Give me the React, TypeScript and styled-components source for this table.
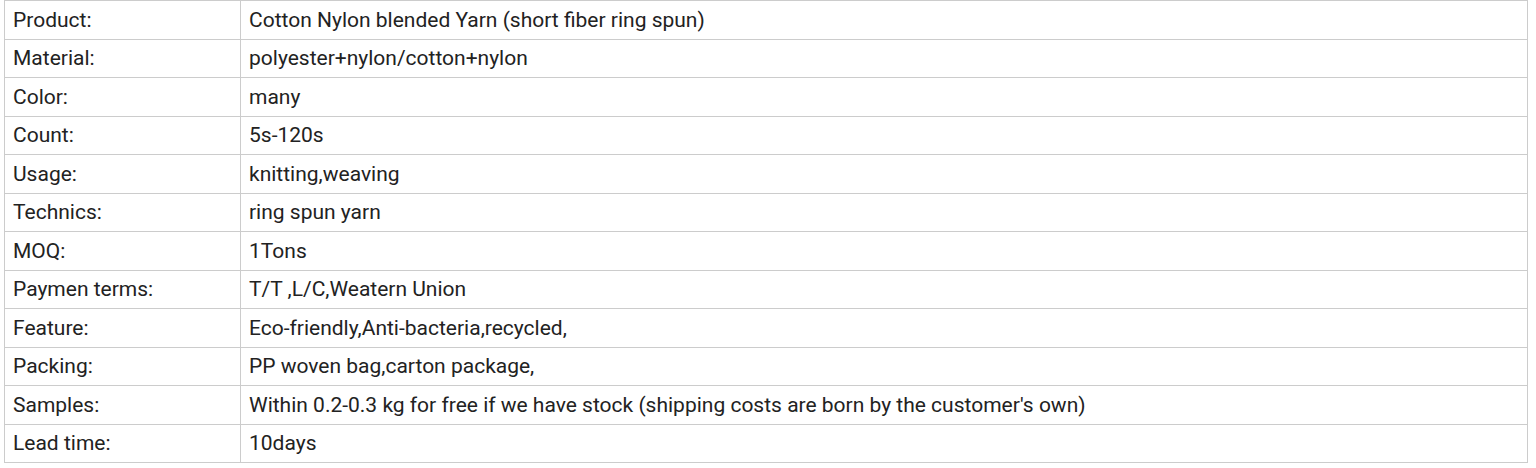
import React from "react";
import styled, { createGlobalStyle } from "styled-components";

const Global = createGlobalStyle`
  html, body { margin: 0; padding: 0; background: #fff; }
  body { font-family: Roboto, "Liberation Sans", Arial, sans-serif; }
`;

const Wrap = styled.div`
  padding: 0 8px 0 4px;
`;

const Table = styled.table`
  width: 1524px;
  border-collapse: collapse;
  table-layout: fixed;
  color: #222;
  font-size: 21px;
`;

const Row = styled.tr`
  height: 38.5px;
`;

const Cell = styled.td<{ $label?: boolean }>`
  border: 1px solid #cccccc;
  padding: 0 8px;
  line-height: 24px;
  vertical-align: middle;
  width: ${(p) => (p.$label ? "219px" : "auto")};
`;

const rows: [string, string][] = [
  ["Product:", "Cotton Nylon blended Yarn (short fiber ring spun)"],
  ["Material:", "polyester+nylon/cotton+nylon"],
  ["Color:", "many"],
  ["Count:", "5s-120s"],
  ["Usage:", "knitting,weaving"],
  ["Technics:", "ring spun yarn"],
  ["MOQ:", "1Tons"],
  ["Paymen terms:", "T/T ,L/C,Weatern Union"],
  ["Feature:", "Eco-friendly,Anti-bacteria,recycled,"],
  ["Packing:", "PP woven bag,carton package,"],
  ["Samples:", "Within 0.2-0.3 kg for free if we have stock (shipping costs are born by the customer's own)"],
  ["Lead time:", "10days"],
];

export default function App() {
  return (
    <>
      <Global />
      <Wrap>
        <Table>
          <tbody>
            {rows.map(([k, v]) => (
              <Row key={k}>
                <Cell $label>{k}</Cell>
                <Cell>{v}</Cell>
              </Row>
            ))}
          </tbody>
        </Table>
      </Wrap>
    </>
  );
}
